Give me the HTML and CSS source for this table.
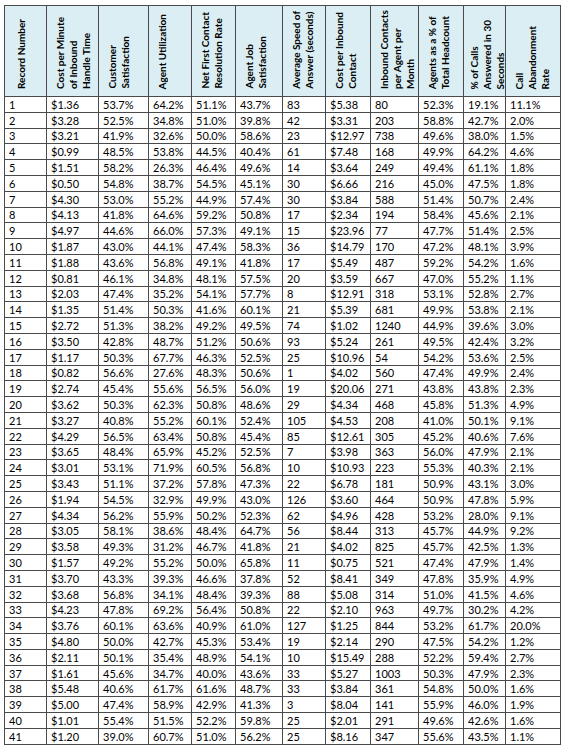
FILE: index.html
```html
<!DOCTYPE html>
<html>
<head>
<meta charset="utf-8">
<link rel="stylesheet" href="styles.css">
</head>
<body>
<table class="grid">
<colgroup>
<col class="c1"><col class="c2"><col class="c3"><col class="c4"><col class="c5"><col class="c6"><col class="c7"><col class="c8"><col class="c9"><col class="c10"><col class="c11"><col class="c12">
</colgroup>
<thead>
<tr class="head">
<th><div class="vt vt-first">Record Number</div></th>
<th><div class="vt">Cost per Minute<br>of Inbound<br>Handle Time</div></th>
<th><div class="vt">Customer<br>Satisfaction</div></th>
<th><div class="vt">Agent Utilization</div></th>
<th><div class="vt">Net First Contact<br>Resolution Rate</div></th>
<th><div class="vt">Agent Job<br>Satisfaction</div></th>
<th><div class="vt">Average Speed of<br>Answer (seconds)</div></th>
<th><div class="vt">Cost per Inbound<br>Contact</div></th>
<th><div class="vt">Inbound Contacts<br>per Agent per<br>Month</div></th>
<th><div class="vt">Agents as a % of<br>Total Headcount</div></th>
<th><div class="vt vt-tight">% of Calls<br>Answered in 30<br>Seconds</div></th>
<th><div class="vt">Call<br>Abandonment<br>Rate</div></th>
</tr>
</thead>
<tbody>
<tr><td>1</td><td>$1.36</td><td>53.7%</td><td>64.2%</td><td>51.1%</td><td>43.7%</td><td>83</td><td>$5.38</td><td>80</td><td>52.3%</td><td>19.1%</td><td>11.1%</td></tr>
<tr><td>2</td><td>$3.28</td><td>52.5%</td><td>34.8%</td><td>51.0%</td><td>39.8%</td><td>42</td><td>$3.31</td><td>203</td><td>58.8%</td><td>42.7%</td><td>2.0%</td></tr>
<tr><td>3</td><td>$3.21</td><td>41.9%</td><td>32.6%</td><td>50.0%</td><td>58.6%</td><td>23</td><td>$12.97</td><td>738</td><td>49.6%</td><td>38.0%</td><td>1.5%</td></tr>
<tr><td>4</td><td>$0.99</td><td>48.5%</td><td>53.8%</td><td>44.5%</td><td>40.4%</td><td>61</td><td>$7.48</td><td>168</td><td>49.9%</td><td>64.2%</td><td>4.6%</td></tr>
<tr><td>5</td><td>$1.51</td><td>58.2%</td><td>26.3%</td><td>46.4%</td><td>49.6%</td><td>14</td><td>$3.64</td><td>249</td><td>49.4%</td><td>61.1%</td><td>1.8%</td></tr>
<tr><td>6</td><td>$0.50</td><td>54.8%</td><td>38.7%</td><td>54.5%</td><td>45.1%</td><td>30</td><td>$6.66</td><td>216</td><td>45.0%</td><td>47.5%</td><td>1.8%</td></tr>
<tr><td>7</td><td>$4.30</td><td>53.0%</td><td>55.2%</td><td>44.9%</td><td>57.4%</td><td>30</td><td>$3.84</td><td>588</td><td>51.4%</td><td>50.7%</td><td>2.4%</td></tr>
<tr><td>8</td><td>$4.13</td><td>41.8%</td><td>64.6%</td><td>59.2%</td><td>50.8%</td><td>17</td><td>$2.34</td><td>194</td><td>58.4%</td><td>45.6%</td><td>2.1%</td></tr>
<tr><td>9</td><td>$4.97</td><td>44.6%</td><td>66.0%</td><td>57.3%</td><td>49.1%</td><td>15</td><td>$23.96</td><td>77</td><td>47.7%</td><td>51.4%</td><td>2.5%</td></tr>
<tr><td>10</td><td>$1.87</td><td>43.0%</td><td>44.1%</td><td>47.4%</td><td>58.3%</td><td>36</td><td>$14.79</td><td>170</td><td>47.2%</td><td>48.1%</td><td>3.9%</td></tr>
<tr><td>11</td><td>$1.88</td><td>43.6%</td><td>56.8%</td><td>49.1%</td><td>41.8%</td><td>17</td><td>$5.49</td><td>487</td><td>59.2%</td><td>54.2%</td><td>1.6%</td></tr>
<tr><td>12</td><td>$0.81</td><td>46.1%</td><td>34.8%</td><td>48.1%</td><td>57.5%</td><td>20</td><td>$3.59</td><td>667</td><td>47.0%</td><td>55.2%</td><td>1.1%</td></tr>
<tr><td>13</td><td>$2.03</td><td>47.4%</td><td>35.2%</td><td>54.1%</td><td>57.7%</td><td>8</td><td>$12.91</td><td>318</td><td>53.1%</td><td>52.8%</td><td>2.7%</td></tr>
<tr><td>14</td><td>$1.35</td><td>51.4%</td><td>50.3%</td><td>41.6%</td><td>60.1%</td><td>21</td><td>$5.39</td><td>681</td><td>49.9%</td><td>53.8%</td><td>2.1%</td></tr>
<tr><td>15</td><td>$2.72</td><td>51.3%</td><td>38.2%</td><td>49.2%</td><td>49.5%</td><td>74</td><td>$1.02</td><td>1240</td><td>44.9%</td><td>39.6%</td><td>3.0%</td></tr>
<tr><td>16</td><td>$3.50</td><td>42.8%</td><td>48.7%</td><td>51.2%</td><td>50.6%</td><td>93</td><td>$5.24</td><td>261</td><td>49.5%</td><td>42.4%</td><td>3.2%</td></tr>
<tr><td>17</td><td>$1.17</td><td>50.3%</td><td>67.7%</td><td>46.3%</td><td>52.5%</td><td>25</td><td>$10.96</td><td>54</td><td>54.2%</td><td>53.6%</td><td>2.5%</td></tr>
<tr><td>18</td><td>$0.82</td><td>56.6%</td><td>27.6%</td><td>48.3%</td><td>50.6%</td><td>1</td><td>$4.02</td><td>560</td><td>47.4%</td><td>49.9%</td><td>2.4%</td></tr>
<tr><td>19</td><td>$2.74</td><td>45.4%</td><td>55.6%</td><td>56.5%</td><td>56.0%</td><td>19</td><td>$20.06</td><td>271</td><td>43.8%</td><td>43.8%</td><td>2.3%</td></tr>
<tr><td>20</td><td>$3.62</td><td>50.3%</td><td>62.3%</td><td>50.8%</td><td>48.6%</td><td>29</td><td>$4.34</td><td>468</td><td>45.8%</td><td>51.3%</td><td>4.9%</td></tr>
<tr><td>21</td><td>$3.27</td><td>40.8%</td><td>55.2%</td><td>60.1%</td><td>52.4%</td><td>105</td><td>$4.53</td><td>208</td><td>41.0%</td><td>50.1%</td><td>9.1%</td></tr>
<tr><td>22</td><td>$4.29</td><td>56.5%</td><td>63.4%</td><td>50.8%</td><td>45.4%</td><td>85</td><td>$12.61</td><td>305</td><td>45.2%</td><td>40.6%</td><td>7.6%</td></tr>
<tr><td>23</td><td>$3.65</td><td>48.4%</td><td>65.9%</td><td>45.2%</td><td>52.5%</td><td>7</td><td>$3.98</td><td>363</td><td>56.0%</td><td>47.9%</td><td>2.1%</td></tr>
<tr><td>24</td><td>$3.01</td><td>53.1%</td><td>71.9%</td><td>60.5%</td><td>56.8%</td><td>10</td><td>$10.93</td><td>223</td><td>55.3%</td><td>40.3%</td><td>2.1%</td></tr>
<tr><td>25</td><td>$3.43</td><td>51.1%</td><td>37.2%</td><td>57.8%</td><td>47.3%</td><td>22</td><td>$6.78</td><td>181</td><td>50.9%</td><td>43.1%</td><td>3.0%</td></tr>
<tr><td>26</td><td>$1.94</td><td>54.5%</td><td>32.9%</td><td>49.9%</td><td>43.0%</td><td>126</td><td>$3.60</td><td>464</td><td>50.9%</td><td>47.8%</td><td>5.9%</td></tr>
<tr><td>27</td><td>$4.34</td><td>56.2%</td><td>55.9%</td><td>50.2%</td><td>52.3%</td><td>62</td><td>$4.96</td><td>428</td><td>53.2%</td><td>28.0%</td><td>9.1%</td></tr>
<tr><td>28</td><td>$3.05</td><td>58.1%</td><td>38.6%</td><td>48.4%</td><td>64.7%</td><td>56</td><td>$8.44</td><td>313</td><td>45.7%</td><td>44.9%</td><td>9.2%</td></tr>
<tr><td>29</td><td>$3.58</td><td>49.3%</td><td>31.2%</td><td>46.7%</td><td>41.8%</td><td>21</td><td>$4.02</td><td>825</td><td>45.7%</td><td>42.5%</td><td>1.3%</td></tr>
<tr><td>30</td><td>$1.57</td><td>49.2%</td><td>55.2%</td><td>50.0%</td><td>65.8%</td><td>11</td><td>$0.75</td><td>521</td><td>47.4%</td><td>47.9%</td><td>1.4%</td></tr>
<tr><td>31</td><td>$3.70</td><td>43.3%</td><td>39.3%</td><td>46.6%</td><td>37.8%</td><td>52</td><td>$8.41</td><td>349</td><td>47.8%</td><td>35.9%</td><td>4.9%</td></tr>
<tr><td>32</td><td>$3.68</td><td>56.8%</td><td>34.1%</td><td>48.4%</td><td>39.3%</td><td>88</td><td>$5.08</td><td>314</td><td>51.0%</td><td>41.5%</td><td>4.6%</td></tr>
<tr><td>33</td><td>$4.23</td><td>47.8%</td><td>69.2%</td><td>56.4%</td><td>50.8%</td><td>22</td><td>$2.10</td><td>963</td><td>49.7%</td><td>30.2%</td><td>4.2%</td></tr>
<tr><td>34</td><td>$3.76</td><td>60.1%</td><td>63.6%</td><td>40.9%</td><td>61.0%</td><td>127</td><td>$1.25</td><td>844</td><td>53.2%</td><td>61.7%</td><td>20.0%</td></tr>
<tr><td>35</td><td>$4.80</td><td>50.0%</td><td>42.7%</td><td>45.3%</td><td>53.4%</td><td>19</td><td>$2.14</td><td>290</td><td>47.5%</td><td>54.2%</td><td>1.2%</td></tr>
<tr><td>36</td><td>$2.11</td><td>50.1%</td><td>35.4%</td><td>48.9%</td><td>54.1%</td><td>10</td><td>$15.49</td><td>288</td><td>52.2%</td><td>59.4%</td><td>2.7%</td></tr>
<tr><td>37</td><td>$1.61</td><td>45.6%</td><td>34.7%</td><td>40.0%</td><td>43.6%</td><td>33</td><td>$5.27</td><td>1003</td><td>50.3%</td><td>47.9%</td><td>2.3%</td></tr>
<tr><td>38</td><td>$5.48</td><td>40.6%</td><td>61.7%</td><td>61.6%</td><td>48.7%</td><td>33</td><td>$3.84</td><td>361</td><td>54.8%</td><td>50.0%</td><td>1.6%</td></tr>
<tr><td>39</td><td>$5.00</td><td>47.4%</td><td>58.9%</td><td>42.9%</td><td>41.3%</td><td>3</td><td>$8.04</td><td>141</td><td>55.9%</td><td>46.0%</td><td>1.9%</td></tr>
<tr><td>40</td><td>$1.01</td><td>55.4%</td><td>51.5%</td><td>52.2%</td><td>59.8%</td><td>25</td><td>$2.01</td><td>291</td><td>49.6%</td><td>42.6%</td><td>1.6%</td></tr>
<tr><td>41</td><td>$1.20</td><td>39.0%</td><td>60.7%</td><td>51.0%</td><td>56.2%</td><td>25</td><td>$8.16</td><td>347</td><td>55.6%</td><td>43.5%</td><td>1.1%</td></tr>
</tbody>
</table>
</body>
</html>
```
FILE: styles.css
```css
html, body {
  margin: 0;
  padding: 0;
  background: #ffffff;
}

body {
  padding: 5px 0 0 4px;
  font-family: Lato, "Liberation Sans", sans-serif;
  color: #000;
}

.grid {
  border-collapse: collapse;
  table-layout: fixed;
  width: 556px;
  border: 1px solid #4a4a4a;
}

.c1 { width: 42px; }
.c2 { width: 52px; }
.c3 { width: 50px; }
.c4 { width: 43px; }
.c5 { width: 44px; }
.c6 { width: 47px; }
.c7 { width: 43px; }
.c8 { width: 45px; }
.c9 { width: 48px; }
.c10 { width: 45px; }
.c11 { width: 42px; }
.c12 { width: 55px; }

.grid th,
.grid td {
  border: 1px solid #4a4a4a;
  padding: 0;
  text-align: left;
}

.head {
  height: 91px;
}

.grid th {
  background: #daeef3;
  vertical-align: bottom;
  padding: 0 0 7px 7px;
  font-weight: 700;
  font-size: 10px;
  line-height: 13px;
}

.vt {
  writing-mode: vertical-rl;
  transform: rotate(180deg);
  white-space: nowrap;
}

.vt-first {
  margin-left: 3px;
}

.vt-tight {
  margin-left: -3px;
}

.grid tbody tr {
  height: 15.8px;
}

.grid td {
  padding: 0 0 0 4px;
  font-size: 11px;
  line-height: 13px;
  vertical-align: middle;
  white-space: nowrap;
}
```
